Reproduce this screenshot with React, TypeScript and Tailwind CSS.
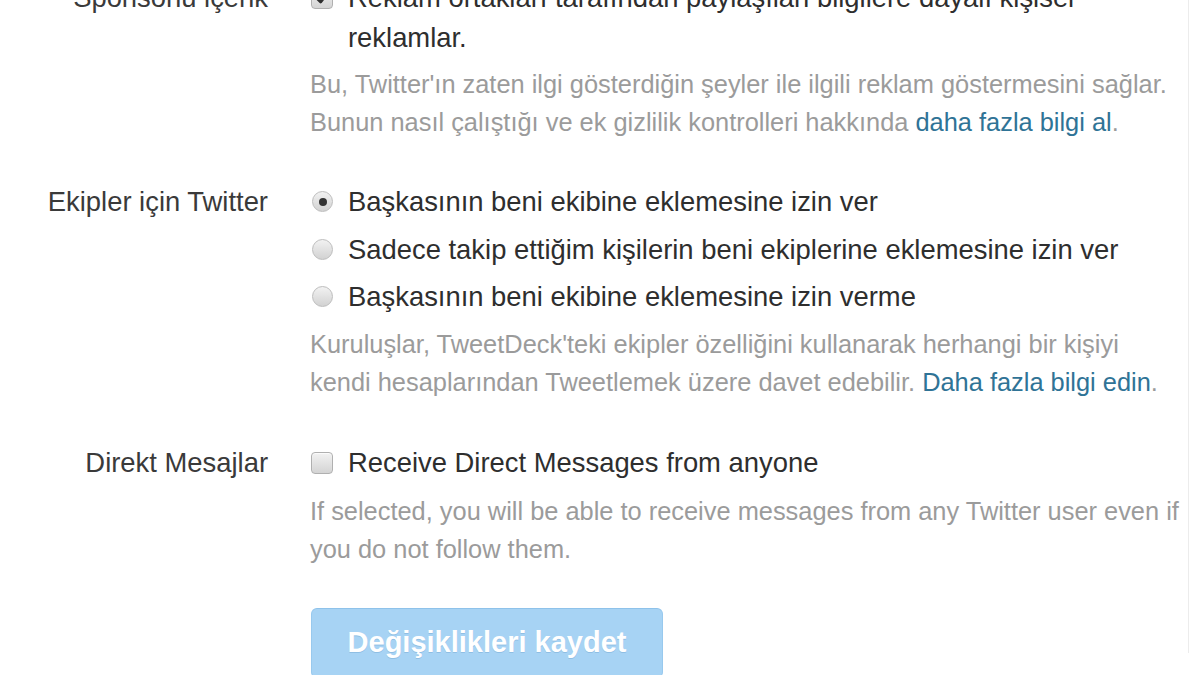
import React from "react";

const font = { fontFamily: '"Liberation Sans", Arial, sans-serif' };

function Checkbox({ checked }: { checked?: boolean }) {
  return (
    <span className="relative inline-block w-[22px] h-[22px] rounded-[4px] border border-[#b0b0b0] bg-gradient-to-b from-[#f2f2f2] to-[#d4d4d4] shadow-[inset_0_1px_1px_rgba(255,255,255,0.8)]">
      {checked && (
        <svg viewBox="0 0 22 22" className="absolute inset-0 w-full h-full">
          <path d="M5.5 11.5 L9.5 15.5 L16.5 6.5" fill="none" stroke="#2f2f2f" strokeWidth="3" strokeLinecap="round" strokeLinejoin="round" />
        </svg>
      )}
    </span>
  );
}

function Radio({ checked }: { checked?: boolean }) {
  return (
    <span className="relative inline-flex items-center justify-center w-[21px] h-[21px] rounded-full border border-[#bdbdbd] bg-gradient-to-b from-[#f2f2f2] to-[#d2d2d2]">
      {checked && <span className="w-[8px] h-[8px] rounded-full bg-[#333]" />}
    </span>
  );
}

export default function App() {
  return (
    <div className="w-[1200px] h-[675px] overflow-hidden bg-white" style={font}>
      <div className="w-[1189px] h-[675px] border-r border-[#ececec]">
        <div className="-mt-[22px]">
          {/* Row 1 */}
          <div className="flex">
            <div className="w-[268px] shrink-0 text-right text-[27.4px] leading-[40px] text-[#3a3a3a] whitespace-nowrap">Sponsorlu içerik</div>
            <div className="ml-[42px]">
              <div className="flex items-start">
                <span className="mt-[9px] ml-[1px] flex">
                  <Checkbox checked />
                </span>
                <div className="ml-[15px] text-[27.4px] leading-[40px] text-[#2e2e2e] whitespace-nowrap">
                  <div>Reklam ortakları tarafından paylaşılan bilgilere dayalı kişisel</div>
                  <div>reklamlar.</div>
                </div>
              </div>
              <div className="mt-[7px] text-[25.4px] leading-[38px] text-[#9b9b9b] whitespace-nowrap">
                <div>Bu, Twitter'ın zaten ilgi gösterdiğin şeyler ile ilgili reklam göstermesini sağlar.</div>
                <div>
                  Bunun nasıl çalıştığı ve ek gizlilik kontrolleri hakkında{" "}
                  <span className="text-[#2f7396]">daha fazla bilgi al</span>.
                </div>
              </div>
            </div>
          </div>

          {/* Row 2 */}
          <div className="flex mt-[37px]">
            <div className="w-[268px] shrink-0 text-right text-[27.4px] leading-[47.5px] text-[#3a3a3a] whitespace-nowrap">Ekipler için Twitter</div>
            <div className="ml-[42px]">
              {[
                { t: "Başkasının beni ekibine eklemesine izin ver", c: true },
                { t: "Sadece takip ettiğim kişilerin beni ekiplerine eklemesine izin ver", c: false },
                { t: "Başkasının beni ekibine eklemesine izin verme", c: false },
              ].map((o) => (
                <div key={o.t} className="flex items-center h-[47.5px]">
                  <span className="ml-[2px] flex">
                    <Radio checked={o.c} />
                  </span>
                  <span className="ml-[15px] text-[27.4px] text-[#2e2e2e] whitespace-nowrap">{o.t}</span>
                </div>
              ))}
              <div className="mt-[5.5px] text-[25.4px] leading-[37.5px] text-[#9b9b9b] whitespace-nowrap">
                <div>Kuruluşlar, TweetDeck'teki ekipler özelliğini kullanarak herhangi bir kişiyi</div>
                <div>
                  kendi hesaplarından Tweetlemek üzere davet edebilir.{" "}
                  <span className="text-[#2f7396]">Daha fazla bilgi edin</span>.
                </div>
              </div>
            </div>
          </div>

          {/* Row 3 */}
          <div className="flex mt-[42px]">
            <div className="w-[268px] shrink-0 text-right text-[27.4px] leading-[40px] text-[#3a3a3a] whitespace-nowrap">Direkt Mesajlar</div>
            <div className="ml-[42px]">
              <div className="flex items-center h-[40px]">
                <span className="ml-[1px] flex">
                  <Checkbox />
                </span>
                <span className="ml-[15px] text-[27.4px] text-[#2e2e2e] whitespace-nowrap">Receive Direct Messages from anyone</span>
              </div>
              <div className="mt-[10px] text-[25.4px] leading-[37.5px] text-[#9b9b9b] whitespace-nowrap">
                <div>If selected, you will be able to receive messages from any Twitter user even if</div>
                <div>you do not follow them.</div>
              </div>
              <button className="mt-[40px] ml-[1px] w-[352px] h-[70px] rounded-[6px] bg-[#a7d3f4] border border-[#98c9ee] border-t-[#8ec2ea] text-white font-bold text-[29px] flex items-center justify-center [text-shadow:0_1px_0_rgba(120,170,210,0.5)]">
                Değişiklikleri kaydet
              </button>
            </div>
          </div>
        </div>
      </div>
    </div>
  );
}
